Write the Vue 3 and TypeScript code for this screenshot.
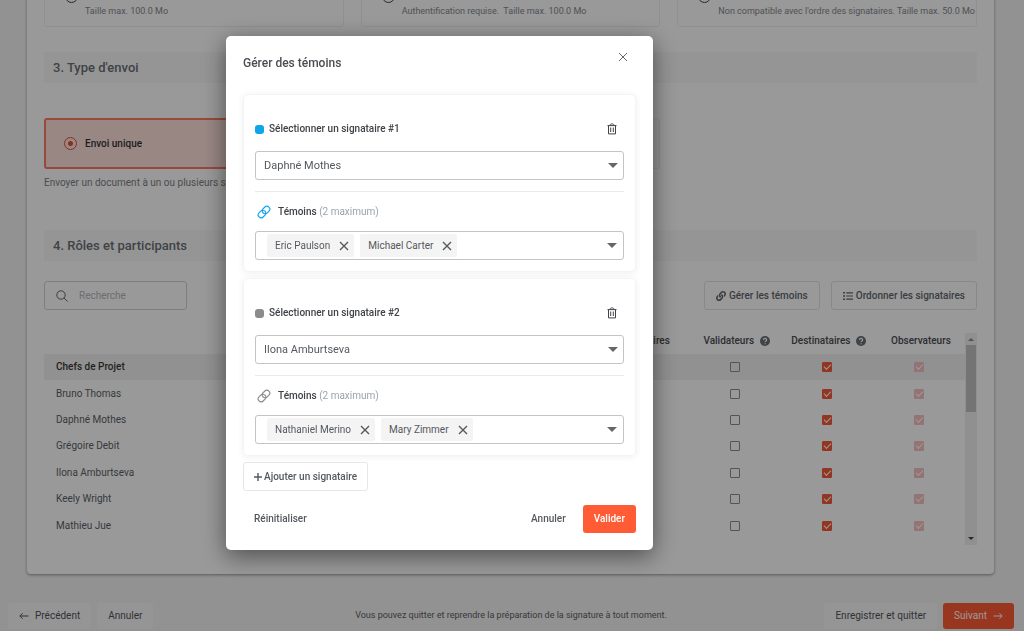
<script setup lang="ts">
import { ref, reactive } from 'vue'

interface Signer {
  id: number
  name: string
  accent: string
  witnesses: string[]
}

const participants = [
  'Bruno Thomas',
  'Daphné Mothes',
  'Grégoire Debit',
  'Ilona Amburtseva',
  'Keely Wright',
  'Mathieu Jue',
]

const rows = reactive(
  ['Chefs de Projet', ...participants].map((name, i) => ({
    name,
    group: i === 0,
    validator: false,
    recipient: true,
  })),
)

const uploads = [
  'Taille max. 100.0 Mo',
  'Authentification requise.\u00a0 Taille max. 100.0 Mo',
  'Non compatible avec l\'ordre des signataires. Taille max. 50.0 Mo',
]

const signers = reactive<Signer[]>([
  { id: 1, name: 'Daphné Mothes', accent: 'blue', witnesses: ['Eric Paulson', 'Michael Carter'] },
  { id: 2, name: 'Ilona Amburtseva', accent: 'gray', witnesses: ['Nathaniel Merino', 'Mary Zimmer'] },
])

const search = ref('')

function removeWitness(signer: Signer, name: string) {
  signer.witnesses = signer.witnesses.filter((w) => w !== name)
}

function removeSigner(id: number) {
  const index = signers.findIndex((s) => s.id === id)
  if (index >= 0) signers.splice(index, 1)
}

function addSigner() {
  const id = Math.max(0, ...signers.map((s) => s.id)) + 1
  signers.push({ id, name: participants[0], accent: 'gray', witnesses: [] })
}
</script>

<template>
  <div class="page">
    <main class="main">
      <div class="panel">
        <div class="thirds uploads">
          <div v-for="(text, i) in uploads" :key="i" class="upload">
            <span class="ring"></span>
            <span class="upload-text">{{ text }}</span>
          </div>
        </div>

        <h2 class="section">3. Type d'envoi</h2>
        <div class="thirds kinds">
          <label class="kind selected">
            <input type="radio" name="kind" checked />
            <span>Envoi unique</span>
          </label>
          <div class="kind"></div>
        </div>
        <p class="hint">Envoyer un document à un ou plusieurs signataires.</p>

        <h2 class="section">4. Rôles et participants</h2>
        <div class="tools">
          <label class="search">
            <svg viewBox="0 0 12 12" width="12" height="12" aria-hidden="true">
              <circle cx="5" cy="5" r="4.2" />
              <path d="M8 8l3.6 3.6" />
            </svg>
            <input v-model="search" type="text" placeholder="Recherche" aria-label="Recherche" />
          </label>
          <div class="tool-buttons">
            <button type="button" class="tool">
              <svg class="solid" viewBox="0 0 512 512" width="10" height="10" aria-hidden="true">
                <path d="M326.612 185.391c59.747 59.809 58.927 155.698.36 214.59-.11.12-.24.25-.36.37l-67.2 67.2c-59.27 59.27-155.699 59.262-214.96 0-59.27-59.26-59.27-155.7 0-214.96l37.106-37.106c9.84-9.84 26.786-3.3 27.294 10.606.648 17.722 3.826 35.527 9.69 52.721 1.986 5.822.567 12.262-3.783 16.612l-13.087 13.087c-28.026 28.026-28.905 73.66-1.155 101.96 28.024 28.579 74.086 28.749 102.325.51l67.2-67.19c28.191-28.191 28.073-73.757 0-101.83-3.701-3.694-7.429-6.564-10.341-8.569a16.037 16.037 0 0 1-6.947-12.606c-.396-10.567 3.348-21.456 11.698-29.806l21.054-21.055c5.521-5.521 14.182-6.199 20.584-1.731a152.482 152.482 0 0 1 20.522 17.197zM467.547 44.449c-59.261-59.262-155.69-59.27-214.96 0l-67.2 67.2c-.12.12-.25.25-.36.37-58.566 58.892-59.387 154.781.36 214.59a152.454 152.454 0 0 0 20.521 17.196c6.402 4.468 15.064 3.789 20.584-1.731l21.054-21.055c8.35-8.35 12.094-19.239 11.698-29.806a16.037 16.037 0 0 0-6.947-12.606c-2.912-2.005-6.64-4.875-10.341-8.569-28.073-28.073-28.191-73.639 0-101.83l67.2-67.19c28.239-28.239 74.3-28.069 102.325.51 27.75 28.3 26.872 73.934-1.155 101.96l-13.087 13.087c-4.35 4.35-5.769 10.79-3.783 16.612 5.864 17.194 9.042 34.999 9.69 52.721.509 13.906 17.454 20.446 27.294 10.606l37.106-37.106c59.271-59.259 59.271-155.699.001-214.959z" />
              </svg>
              Gérer les témoins
            </button>
            <button type="button" class="tool">
              <svg class="solid" viewBox="0 0 10 10" width="10" height="10" aria-hidden="true">
                <path d="M0 1h2v1.6H0zM0 4.2h2v1.6H0zM0 7.4h2V9H0zM3.2 1.2H10v1.2H3.2zM3.2 4.4H10v1.2H3.2zM3.2 7.6H10v1.2H3.2z" />
              </svg>
              Ordonner les signataires
            </button>
          </div>
        </div>

        <div class="table-wrap">
          <table class="roles">
            <thead>
              <tr>
                <th class="name" scope="col" aria-label="Nom"></th>
                <th scope="col">Signataires</th>
                <th scope="col">
                  <span class="head">Validateurs
                    <svg viewBox="0 0 10 10" width="10" height="10" aria-hidden="true">
                      <circle cx="5" cy="5" r="5" />
                      <path d="M3.4 3.9c.1-2 3.3-1.9 3.2 0 0 1-1.5 1.1-1.5 2.2M5.1 7.2v1" />
                    </svg>
                  </span>
                </th>
                <th scope="col">
                  <span class="head">Destinataires
                    <svg viewBox="0 0 10 10" width="10" height="10" aria-hidden="true">
                      <circle cx="5" cy="5" r="5" />
                      <path d="M3.4 3.9c.1-2 3.3-1.9 3.2 0 0 1-1.5 1.1-1.5 2.2M5.1 7.2v1" />
                    </svg>
                  </span>
                </th>
                <th scope="col">Observateurs</th>
              </tr>
            </thead>
            <tbody>
              <tr v-for="row in rows" :key="row.name" :class="{ group: row.group }">
                <td class="name">{{ row.name }}</td>
                <td></td>
                <td><input v-model="row.validator" type="checkbox" :aria-label="'Validateur : ' + row.name" /></td>
                <td><input v-model="row.recipient" type="checkbox" :aria-label="'Destinataire : ' + row.name" /></td>
                <td><input type="checkbox" checked disabled :aria-label="'Observateur : ' + row.name" /></td>
              </tr>
            </tbody>
          </table>
          <div class="scrollbar" aria-hidden="true">
            <span class="arrow up"></span>
            <span class="thumb"></span>
            <span class="arrow down"></span>
          </div>
        </div>
      </div>
    </main>

    <footer class="footer">
      <div class="side">
        <button type="button" class="nav">
          <svg viewBox="0 0 10 8" width="10" height="8" aria-hidden="true"><path d="M9.5 4H1M3.6 1.2L.8 4l2.8 2.8" /></svg>
          Précédent
        </button>
        <button type="button" class="nav">Annuler</button>
      </div>
      <p class="note">Vous pouvez quitter et reprendre la préparation de la signature à tout moment.</p>
      <div class="side end">
        <button type="button" class="nav">Enregistrer et quitter</button>
        <button type="button" class="nav primary">
          Suivant
          <svg viewBox="0 0 10 8" width="10" height="8" aria-hidden="true"><path d="M.5 4H9M6.4 1.2L9.2 4 6.4 6.8" /></svg>
        </button>
      </div>
    </footer>

    <div class="overlay">
      <section class="modal" role="dialog" aria-modal="true" aria-labelledby="modal-title">
        <header class="modal-head">
          <h1 id="modal-title">Gérer des témoins</h1>
          <button type="button" class="icon-button close" aria-label="Fermer">
            <svg class="line" viewBox="0 0 10 10" width="10" height="10"><path d="M1 1l8 8M9 1L1 9" /></svg>
          </button>
        </header>

        <div class="cards">
          <article v-for="(signer, i) in signers" :key="signer.id" class="card" :class="signer.accent">
            <div class="card-head">
              <span class="dot"></span>
              <label :for="'signer-' + signer.id">Sélectionner un signataire #{{ i + 1 }}</label>
              <button type="button" class="icon-button trash" aria-label="Supprimer" @click="removeSigner(signer.id)">
                <svg class="line" viewBox="0 0 10 12" width="10" height="12">
                  <path d="M.5 2.6h9M3 2.4C3 .4 7 .4 7 2.4M1.5 2.8v8.1h7V2.8M3.7 4.5V9M6.3 4.5V9" />
                </svg>
              </button>
            </div>
            <div class="select">
              <select :id="'signer-' + signer.id" v-model="signer.name">
                <option v-for="p in participants" :key="p">{{ p }}</option>
              </select>
              <span class="caret"></span>
            </div>
            <div class="witness-head">
              <svg class="chain" viewBox="0 0 24 24" width="14" height="14" aria-hidden="true">
                <path d="M10 13a5 5 0 0 0 7.54.54l3-3a5 5 0 0 0-7.07-7.07l-4 4a5 5 0 0 0 .53 5.530" />
                <path d="M14 11a5 5 0 0 0-7.54-.54l-3 3a5 5 0 0 0 7.07 7.07l4-4a5 5 0 0 0-.53-5.530" />
              </svg>
              <label :for="'witness-' + signer.id">Témoins <span class="muted">(2 maximum)</span></label>
            </div>
            <div class="multi">
              <span v-for="w in signer.witnesses" :key="w" class="chip">
                {{ w }}
                <button type="button" class="icon-button" :aria-label="'Retirer ' + w" @click="removeWitness(signer, w)">
                  <svg class="line heavy" viewBox="0 0 10 10" width="10" height="10"><path d="M1 1l8 8M9 1L1 9" /></svg>
                </button>
              </span>
              <input :id="'witness-' + signer.id" type="text" />
              <span class="caret"></span>
            </div>
          </article>
        </div>

        <button type="button" class="add" @click="addSigner">
          <svg class="line heavy" viewBox="0 0 8 8" width="8" height="8" aria-hidden="true"><path d="M4 0v8M0 4h8" /></svg>
          Ajouter un signataire
        </button>

        <footer class="modal-foot">
          <button type="button" class="text-button reset">Réinitialiser</button>
          <button type="button" class="text-button">Annuler</button>
          <button type="button" class="submit">Valider</button>
        </footer>
      </section>
    </div>
  </div>
</template>

<style>
body {
  margin: 0;
}
</style>

<style scoped>
* {
  box-sizing: border-box;
}
.page {
  height: 100vh;
  display: flex;
  flex-direction: column;
  overflow: hidden;
  background: #f3f3f3;
  color: #5d6064;
  font-family: Roboto, "Liberation Sans", sans-serif;
  font-size: 10px;
  line-height: 14px;
}
h1,
h2,
p {
  margin: 0;
}
button,
input,
select {
  font: inherit;
  color: inherit;
}
button {
  padding: 0;
  border: 0;
  background: none;
  cursor: pointer;
}
.main {
  flex: 1;
  min-height: 0;
  display: flex;
  flex-direction: column;
  justify-content: flex-end;
  overflow: hidden;
  padding: 0 30px 29px 27px;
}
.panel {
  flex: none;
  padding: 17px 17px 29px;
  background: #fff;
  border-radius: 4px;
  box-shadow: 0 1px 3px rgba(0, 0, 0, 0.4);
}
.thirds {
  display: grid;
  grid-template-columns: repeat(3, 1fr);
  gap: 17px;
}
.upload {
  display: flex;
  align-items: flex-end;
  gap: 7px;
  height: 48px;
  padding: 0 0 8px 20px;
  border: 1px solid #f0f0f0;
  border-radius: 3px;
  color: #84888e;
  font-size: 9px;
}
.ring {
  flex: none;
  width: 13px;
  height: 13px;
  margin: 0 0 15px;
  border: 1px solid #444;
  border-radius: 50%;
}
.section {
  margin-top: 25px;
  padding: 0 9px;
  background: #f9f9fa;
  color: #6b6f75;
  font-size: 13px;
  line-height: 31px;
  font-weight: 500;
}
.kinds {
  margin-top: 35px;
}
.kind {
  display: flex;
  align-items: center;
  gap: 8px;
  height: 51px;
  padding: 0 18px;
  border: 1px solid #eee;
  border-radius: 3px;
  background: #fafafa;
  color: #333;
  font-weight: 500;
}
.kind.selected {
  border: 2px solid #ff7a64;
  border-radius: 3px;
  background: #ffe2dc;
}
.kind input {
  appearance: none;
  width: 13px;
  height: 13px;
  margin: 0;
  border: 1px solid #e0503c;
  border-radius: 50%;
  background: radial-gradient(circle, #e0503c 2px, transparent 3px);
}
.hint {
  margin-top: 7px;
  color: #7d8186;
}
.hint + .section {
  margin-top: 40px;
}
.tools {
  display: flex;
  justify-content: space-between;
  margin-top: 20px;
}
.search {
  display: flex;
  align-items: center;
  gap: 11px;
  width: 143px;
  height: 29px;
  padding: 0 11px;
  border: 1px solid #d2d3d5;
  border-radius: 3px;
}
.search svg {
  flex: none;
  fill: none;
  stroke: #666;
}
.search input {
  width: 100%;
  min-width: 0;
  padding: 0;
  border: 0;
  background: none;
  outline: 0;
}
.search input::placeholder {
  color: #b4b6b9;
}
.tool-buttons {
  display: flex;
  gap: 11px;
}
.tool {
  display: flex;
  align-items: center;
  gap: 3px;
  height: 29px;
  padding: 0 11px;
  border: 1px solid #e2e3e5;
  border-radius: 3px;
  color: #62666d;
  font-weight: 500;
}
.solid {
  fill: currentColor;
}
.table-wrap {
  display: flex;
  height: 212px;
  margin-top: 23px;
}
.roles {
  flex: 1;
  height: 206px;
  border-collapse: collapse;
  table-layout: fixed;
}
th {
  width: 10%;
  height: 21px;
  padding: 0 0 6px 4px;
  color: #4a4d51;
  font-weight: 500;
  text-align: center;
}
td {
  padding: 0;
  text-align: center;
}
th.name {
  width: 60%;
}
td.name {
  padding-left: 12px;
  text-align: left;
}
.group {
  background: #f2f2f2;
}
.group .name {
  color: #3a3a3a;
  font-weight: 500;
}
.head {
  display: inline-flex;
  align-items: center;
  gap: 6px;
}
.head circle {
  fill: #6c6f73;
}
.head path {
  fill: none;
  stroke: #fff;
  stroke-width: 1.2;
}
td input {
  display: block;
  appearance: none;
  position: relative;
  width: 10px;
  height: 10px;
  margin: 0 auto;
  border: 1px solid #8c8c8c;
  border-radius: 1px;
}
td input:checked {
  border-color: #f4593a;
  background: #f4593a;
}
td input:checked::after {
  content: "";
  position: absolute;
  left: 1px;
  top: 1px;
  width: 6px;
  height: 3px;
  border: solid #fff;
  border-width: 0 0 1px 1px;
  transform: rotate(-45deg);
}
td input:disabled {
  border-color: #f6c0c2;
  background: #f6c0c2;
}
.scrollbar {
  display: flex;
  flex-direction: column;
  align-items: center;
  width: 12px;
  padding: 5px 0;
  background: #f1f1f1;
}
.arrow {
  border: 3px solid transparent;
}
.up {
  border-top: 0;
  border-bottom-color: #888;
}
.down {
  margin-top: auto;
  border-bottom: 0;
  border-top-color: #444;
}
.thumb {
  width: 10px;
  height: 67px;
  margin-top: 4px;
  background: #c1c1c1;
}
.footer {
  display: flex;
  align-items: center;
  justify-content: space-between;
  gap: 6px;
  padding: 0 10px 2px 8px;
}
.side {
  flex: 1;
  display: flex;
  gap: 6px;
}
.end {
  justify-content: flex-end;
}
.nav {
  display: flex;
  align-items: center;
  gap: 6px;
  height: 26px;
  padding: 0 11px;
  border-radius: 3px;
  background: #f9f9f9;
  color: #505358;
}
.nav svg {
  fill: none;
  stroke: currentColor;
}
.primary {
  background: #ff5a36;
  color: #fff;
}
.note {
  padding-bottom: 3px;
  font-size: 9px;
}
.overlay {
  position: fixed;
  inset: 0;
  display: flex;
  align-items: flex-start;
  padding: 36px 22% 36px 226px;
  background: rgba(0, 0, 0, 0.4);
}
.modal {
  width: 427px;
  max-width: 100%;
  padding: 17px;
  border-radius: 5px;
  background: #fff;
  color: #55595e;
  box-shadow: 0 6px 24px rgba(0, 0, 0, 0.5);
}
.modal-head {
  display: flex;
  justify-content: space-between;
  height: 41px;
}
h1 {
  padding-top: 3px;
  color: #4a4d51;
  font-size: 12px;
  font-weight: 500;
}
.icon-button {
  display: flex;
  align-items: center;
  justify-content: center;
}
.close {
  width: 26px;
  height: 8px;
  color: #666;
}
.line {
  fill: none;
  stroke: currentColor;
}
.heavy {
  stroke-width: 1.4;
}
.cards {
  display: grid;
  gap: 6px;
}
.card {
  padding: 24px 11px 11px;
  border: 1px solid #f4f4f6;
  border-radius: 5px;
  box-shadow: 0 1px 6px rgba(80, 80, 110, 0.09);
}
.card-head {
  display: flex;
  align-items: center;
  height: 20px;
  color: #3f4246;
  font-weight: 500;
}
.dot {
  width: 9px;
  height: 9px;
  margin-right: 5px;
  border-radius: 3px;
  background: #8b8b8b;
}
.blue .dot {
  background: #0ea5e9;
}
.trash {
  width: 24px;
  margin-left: auto;
}
.select {
  display: grid;
  align-items: center;
  margin-top: 12px;
}
.select > * {
  grid-area: 1 / 1;
}
.select select {
  width: 100%;
  height: 29px;
  padding: 0 8px;
  appearance: none;
  border: 1px solid #c3c4c6;
  border-radius: 3px;
  background: #fff;
  font-size: 11px;
}
.caret {
  justify-self: end;
  margin-right: 6px;
  border: 5px solid transparent;
  border-top-color: #666;
  border-bottom: 0;
  pointer-events: none;
}
.witness-head {
  display: flex;
  align-items: center;
  gap: 7px;
  height: 40px;
  margin-top: 11px;
  padding: 0 2px;
  border-top: 1px solid #eaeaea;
  color: #3f4246;
  font-weight: 500;
}
.chain {
  fill: none;
  stroke: #8b8b8b;
  stroke-width: 2;
  stroke-linecap: round;
}
.blue .chain {
  stroke: #0ea5e9;
}
.muted {
  color: #9ba3ad;
  font-weight: 400;
}
.multi {
  display: flex;
  align-items: center;
  gap: 6px;
  height: 29px;
  padding-left: 11px;
  border: 1px solid #c3c4c6;
  border-radius: 3px;
}
.multi input {
  flex: 1;
  min-width: 0;
  padding: 0;
  border: 0;
  outline: 0;
}
.chip {
  display: flex;
  align-items: center;
  gap: 9px;
  height: 23px;
  padding: 0 5px 0 8px;
  border-radius: 2px;
  background: #f4f4f4;
}
.add {
  display: flex;
  align-items: center;
  gap: 2px;
  height: 29px;
  margin-top: 6px;
  padding: 0 10px;
  border: 1px solid #e6e7ea;
  border-radius: 3px;
  font-weight: 500;
}
.modal-foot {
  display: flex;
  align-items: center;
  gap: 17px;
  margin-top: 14px;
}
.text-button {
  font-weight: 500;
}
.reset {
  margin: 0 auto 0 11px;
}
.submit {
  height: 28px;
  padding: 0 11px;
  border-radius: 3px;
  background: #ff5c35;
  color: #fff;
  font-weight: 500;
}
</style>
